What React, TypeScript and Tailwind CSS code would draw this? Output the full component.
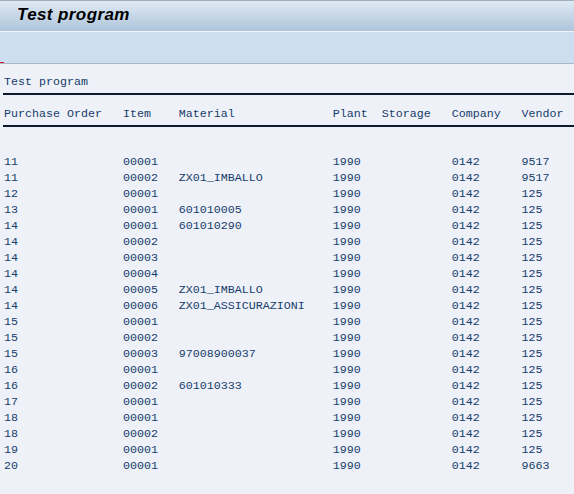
import React from 'react';

interface Row {
  po: string;
  item: string;
  material: string;
  plant: string;
  storage: string;
  company: string;
  vendor: string;
}

const rows: Row[] = [
  { po: '11', item: '00001', material: '', plant: '1990', storage: '', company: '0142', vendor: '9517' },
  { po: '11', item: '00002', material: 'ZX01_IMBALLO', plant: '1990', storage: '', company: '0142', vendor: '9517' },
  { po: '12', item: '00001', material: '', plant: '1990', storage: '', company: '0142', vendor: '125' },
  { po: '13', item: '00001', material: '601010005', plant: '1990', storage: '', company: '0142', vendor: '125' },
  { po: '14', item: '00001', material: '601010290', plant: '1990', storage: '', company: '0142', vendor: '125' },
  { po: '14', item: '00002', material: '', plant: '1990', storage: '', company: '0142', vendor: '125' },
  { po: '14', item: '00003', material: '', plant: '1990', storage: '', company: '0142', vendor: '125' },
  { po: '14', item: '00004', material: '', plant: '1990', storage: '', company: '0142', vendor: '125' },
  { po: '14', item: '00005', material: 'ZX01_IMBALLO', plant: '1990', storage: '', company: '0142', vendor: '125' },
  { po: '14', item: '00006', material: 'ZX01_ASSICURAZIONI', plant: '1990', storage: '', company: '0142', vendor: '125' },
  { po: '15', item: '00001', material: '', plant: '1990', storage: '', company: '0142', vendor: '125' },
  { po: '15', item: '00002', material: '', plant: '1990', storage: '', company: '0142', vendor: '125' },
  { po: '15', item: '00003', material: '97008900037', plant: '1990', storage: '', company: '0142', vendor: '125' },
  { po: '16', item: '00001', material: '', plant: '1990', storage: '', company: '0142', vendor: '125' },
  { po: '16', item: '00002', material: '601010333', plant: '1990', storage: '', company: '0142', vendor: '125' },
  { po: '17', item: '00001', material: '', plant: '1990', storage: '', company: '0142', vendor: '125' },
  { po: '18', item: '00001', material: '', plant: '1990', storage: '', company: '0142', vendor: '125' },
  { po: '18', item: '00002', material: '', plant: '1990', storage: '', company: '0142', vendor: '125' },
  { po: '19', item: '00001', material: '', plant: '1990', storage: '', company: '0142', vendor: '125' },
  { po: '20', item: '00001', material: '', plant: '1990', storage: '', company: '0142', vendor: '9663' },
];

// fixed column widths in characters, like an ABAP WRITE list
const line = (r: Row) =>
  r.po.padEnd(17) +
  r.item.padEnd(8) +
  r.material.padEnd(22) +
  r.plant.padEnd(7) +
  r.storage.padEnd(10) +
  r.company.padEnd(10) +
  r.vendor;

const header: Row = {
  po: 'Purchase Order',
  item: 'Item',
  material: 'Material',
  plant: 'Plant',
  storage: 'Storage',
  company: 'Company',
  vendor: 'Vendor',
};

const ULine = () => (
  <div className="h-4 pt-[3px] -ml-[1px]">
    <div className="h-[2px] bg-[#0b1a2c]" />
  </div>
);

const ListRow = ({ text }: { text: string }) => (
  <div className="h-4 leading-4 whitespace-pre">{text}</div>
);

export default function App() {
  return (
    <div className="w-[574px] h-[494px] overflow-hidden bg-[#eef2f8]">
      {/* Title bar */}
      <div className="h-[31px] border-t border-[#9fb0c4] bg-gradient-to-b from-[#dfe9f4] to-[#aec5db] flex items-center pl-[17px] pb-[2px]">
        <span className="text-[17px] font-bold italic text-black font-['Liberation_Sans',Arial,sans-serif] tracking-[0.4px]">
          Test program
        </span>
      </div>

      {/* Application toolbar */}
      <div className="relative h-[33px] border-t border-[#eef4fa] border-b border-b-[#a9b8c8] bg-[#cddef0]">
        <div className="absolute left-0 bottom-0 w-[4px] h-[1px] bg-[#d02020]" />
      </div>

      {/* List output */}
      <div className="pl-[4px] pt-[10px] text-[11.67px] text-[#163b6b] font-['Liberation_Mono','Courier_New',monospace]">
        <ListRow text="Test program" />
        <ULine />
        <ListRow text={line(header)} />
        <ULine />
        <ListRow text=" " />
        {rows.map((r, i) => (
          <ListRow key={i} text={line(r)} />
        ))}
      </div>
    </div>
  );
}
